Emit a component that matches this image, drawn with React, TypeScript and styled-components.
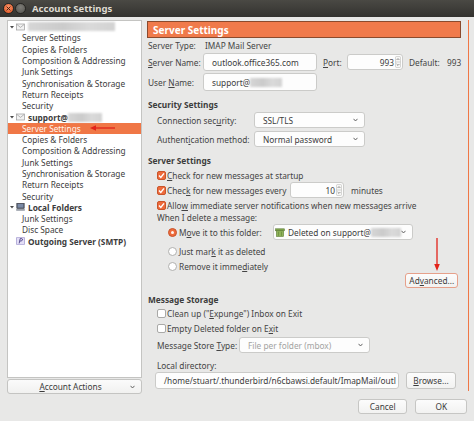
import React from 'react';
import styled, { createGlobalStyle } from 'styled-components';

const orange = '#f07746';

const GlobalStyle = createGlobalStyle`
  html, body {
    margin: 0;
    padding: 0;
  }
  body {
    background: #e8e8e7;
    font-family: "Noto Sans", "Open Sans", sans-serif;
    font-size: 8.3px;
    color: #3c3c3c;
  }
  * {
    box-sizing: border-box;
  }
`;

const Window = styled.div`
  width: 474px;
  height: 421px;
  display: flex;
  flex-direction: column;
  background: #e8e8e7;
  overflow: hidden;
`;

const TitleBar = styled.div`
  height: 17px;
  flex: none;
  display: flex;
  align-items: center;
  gap: 1px;
  padding-left: 3px;
  background: linear-gradient(#4a4944, #33322f);
`;

const WinButton = styled.span<{ $close?: boolean }>`
  width: 11px;
  height: 11px;
  border-radius: 50%;
  border: 1px solid #262522;
  display: flex;
  align-items: center;
  justify-content: center;
  background: ${({ $close }) =>
    $close
      ? 'radial-gradient(circle at 50% 35%, #f7946b, #e0501c)'
      : 'radial-gradient(circle at 50% 35%, #7d7c77, #54534e)'};
`;

const Title = styled.span`
  margin-left: 5px;
  color: #dfdbd2;
  font-weight: 700;
  font-size: 9.5px;
`;

const Body = styled.div`
  flex: 1;
  display: flex;
  padding: 3px 7px 0 7px;
`;

const LeftColumn = styled.div`
  width: 135px;
  flex: none;
  display: flex;
  flex-direction: column;
`;

const Tree = styled.div`
  position: relative;
  height: 358px;
  background: #ffffff;
  border: 1px solid #c4c4c2;
`;

const TreeRow = styled.div<{ $child?: boolean; $selected?: boolean; $bold?: boolean }>`
  height: 11.3px;
  display: flex;
  align-items: center;
  padding-left: ${({ $child }) => ($child ? '14px' : '2px')};
  background: ${({ $selected }) => ($selected ? orange : 'transparent')};
  color: ${({ $selected }) => ($selected ? '#fff4ec' : '#3c3c3c')};
  font-weight: ${({ $bold }) => ($bold ? 700 : 400)};
  white-space: nowrap;
`;

const Toggle = styled.svg`
  width: 4px;
  height: 4px;
  flex: none;
`;

const TreeIcon = styled.svg`
  width: 9px;
  height: 8px;
  margin: 0 3px 0 2px;
  flex: none;
`;

const Blur = styled.span<{ $w: number }>`
  display: inline-block;
  width: ${({ $w }) => $w}px;
  height: 9px;
  background: linear-gradient(90deg, #d6d6d6, #cbcbcb 40%, #dadada 70%, #d2d2d2);
  filter: blur(0.8px);
  flex: none;
`;

const AccountActions = styled.div`
  position: relative;
  margin-top: 1px;
  height: 15px;
  display: flex;
  align-items: center;
  justify-content: center;
  padding-right: 8px;
  border: 1px solid #c4c4c2;
  border-radius: 3px;
  background: linear-gradient(#fbfbfb, #f1f1f0);
`;

const ActionsChevron = styled.svg`
  position: absolute;
  right: 6px;
  top: 5px;
  width: 5px;
  height: 4px;
`;

const RightColumn = styled.div`
  flex: 1;
  margin-left: 2px;
  display: flex;
  flex-direction: column;
`;

const Pane = styled.div`
  position: relative;
  height: 371px;
  padding: 1px 7px 0 3px;
  border-right: 1px solid ${orange};
`;

const Header = styled.div`
  height: 17px;
  display: flex;
  align-items: center;
  padding-left: 5px;
  background: #f07a4b;
  border: 1px solid #8b4a2d;
  color: #ffffff;
  font-weight: 700;
  font-size: 10px;
`;

const Form = styled.div`
  padding-left: 1px;
`;

const Row = styled.div<{ $h: number; $mt?: number; $indent?: number; $end?: boolean }>`
  height: ${({ $h }) => $h}px;
  margin-top: ${({ $mt }) => $mt ?? 0}px;
  padding-left: ${({ $indent }) => $indent ?? 0}px;
  display: flex;
  align-items: center;
  justify-content: ${({ $end }) => ($end ? 'flex-end' : 'flex-start')};
  white-space: nowrap;
`;

const Heading = styled(Row)`
  font-weight: 700;
`;

const Label = styled.span<{ $w?: number; $ml?: number }>`
  flex: none;
  width: ${({ $w }) => ($w ? `${$w}px` : 'auto')};
  margin-left: ${({ $ml }) => $ml ?? 0}px;
  color: #444444;
`;

const Key = styled.span`
  text-decoration: underline;
  text-underline-offset: 1px;
`;

const Field = styled.div<{ $w: number; $h?: number; $disabled?: boolean }>`
  position: relative;
  flex: none;
  width: ${({ $w }) => $w}px;
  height: ${({ $h }) => $h ?? 16}px;
  display: flex;
  align-items: center;
  padding-left: 8px;
  overflow: hidden;
  background: #fdfdfd;
  border: 1px solid #cbcbc9;
  border-radius: 3px;
  color: ${({ $disabled }) => ($disabled ? '#a3a3a1' : '#3c3c3c')};
`;

const SpinField = styled(Field)`
  justify-content: flex-end;
  padding-left: 0;
  padding-right: 8px;
`;

const Spinner = styled.svg`
  position: absolute;
  right: 1px;
  top: 50%;
  transform: translateY(-50%);
  width: 6px;
  height: 12px;
`;

const Chevron = styled.svg`
  position: absolute;
  right: 6px;
  top: 50%;
  transform: translateY(-50%);
  width: 5px;
  height: 4px;
`;

const Check = styled.span<{ $checked?: boolean }>`
  flex: none;
  width: 9px;
  height: 9px;
  margin-right: 1px;
  border-radius: 2px;
  display: flex;
  align-items: center;
  justify-content: center;
  background: ${({ $checked }) => ($checked ? '#ee6b3c' : '#ffffff')};
  border: 1px solid ${({ $checked }) => ($checked ? '#c9542a' : '#a9a9a7')};
`;

const Radio = styled.span<{ $checked?: boolean }>`
  flex: none;
  width: 9px;
  height: 9px;
  margin-right: 2px;
  border-radius: 50%;
  display: flex;
  align-items: center;
  justify-content: center;
  background: ${({ $checked }) => ($checked ? '#ee6b3c' : '#ffffff')};
  border: 1px solid ${({ $checked }) => ($checked ? '#c9542a' : '#b0b0ae')};

  &::after {
    content: '';
    display: ${({ $checked }) => ($checked ? 'block' : 'none')};
    width: 3px;
    height: 3px;
    border-radius: 50%;
    background: #fff6f0;
  }
`;

const Button = styled.div<{ $w: number; $h?: number; $focus?: boolean; $ml?: number }>`
  flex: none;
  width: ${({ $w }) => $w}px;
  height: ${({ $h }) => $h ?? 15}px;
  margin-left: ${({ $ml }) => $ml ?? 0}px;
  display: flex;
  align-items: center;
  justify-content: center;
  white-space: nowrap;
  background: linear-gradient(#fcfcfc, #f2f2f1);
  border: 1px solid ${({ $focus }) => ($focus ? '#e6a08a' : '#c6c6c4')};
  border-radius: 3px;
  color: #3c3c3c;
`;

const Footer = styled.div`
  display: flex;
  justify-content: flex-end;
  gap: 8px;
  padding: 8px 2px 0 0;
`;

const Arrow = styled.svg<{ $x: number; $y: number }>`
  position: absolute;
  left: ${({ $x }) => $x}px;
  top: ${({ $y }) => $y}px;
  overflow: visible;
`;

const ChevronIcon = () => (
  <Chevron viewBox="0 0 5 4">
    <polyline points="0.5,0.8 2.5,3 4.5,0.8" fill="none" stroke="#555" strokeWidth="0.9" />
  </Chevron>
);

const SpinnerIcon = () => (
  <Spinner viewBox="0 0 6 12">
    <rect x="0.5" y="0.5" width="5" height="11" rx="1" fill="#f6f6f5" stroke="#bdbdbb" strokeWidth="0.6" />
    <line x1="0.5" y1="6" x2="5.5" y2="6" stroke="#bdbdbb" strokeWidth="0.6" />
    <polyline points="1.6,4 3,2.6 4.4,4" fill="none" stroke="#666" strokeWidth="0.7" />
    <polyline points="1.6,8 3,9.4 4.4,8" fill="none" stroke="#666" strokeWidth="0.7" />
  </Spinner>
);

const Tick = () => (
  <svg width="7" height="7" viewBox="0 0 7 7">
    <polyline points="1,3.6 2.8,5.4 6,1.4" fill="none" stroke="#ffffff" strokeWidth="1.4" />
  </svg>
);

const TreeToggle = () => (
  <Toggle viewBox="0 0 4 4">
    <polygon points="0,1 4,1 2,3.5" fill="#4a4a4a" />
  </Toggle>
);

const MailIcon = () => (
  <TreeIcon viewBox="0 0 9 8">
    <rect x="0.5" y="1" width="8" height="6" fill="#f2f2f2" stroke="#9a9a9a" strokeWidth="0.7" />
    <polyline points="0.8,1.4 4.5,4.4 8.2,1.4" fill="none" stroke="#9a9a9a" strokeWidth="0.7" />
  </TreeIcon>
);

const ComputerIcon = () => (
  <TreeIcon viewBox="0 0 9 8">
    <rect x="0.8" y="0.3" width="7.4" height="5.2" fill="#4b5263" stroke="#2c2f38" strokeWidth="0.5" />
    <rect x="1.6" y="1" width="5.8" height="3.6" fill="#7b8aa6" />
    <rect x="0.2" y="6" width="8.6" height="1.8" fill="#9aa0aa" />
  </TreeIcon>
);

const SmtpIcon = () => (
  <TreeIcon viewBox="0 0 9 8">
    <rect x="0.5" y="0.3" width="8" height="7.4" rx="0.6" fill="#e3def6" stroke="#8e84c4" strokeWidth="0.6" />
    <path d="M3.2 6.4 L4.2 1.6 L5.8 1.6 Q6.8 1.8 6.4 3 Q6 4 4.8 4 L3.8 4" fill="none" stroke="#4a3f86" strokeWidth="0.9" />
  </TreeIcon>
);

const TrashIcon = () => (
  <svg width="10" height="9" viewBox="0 0 10 9" style={{ flex: 'none', marginLeft: -7, marginRight: 3 }}>
    <rect x="0.5" y="0.8" width="9" height="2" fill="#7da34a" stroke="#557530" strokeWidth="0.5" />
    <rect x="1.3" y="2.8" width="7.4" height="5.8" fill="#8fb35a" stroke="#557530" strokeWidth="0.5" />
    <line x1="3.5" y1="3.8" x2="3.5" y2="7.8" stroke="#5f8236" strokeWidth="0.6" />
    <line x1="6.5" y1="3.8" x2="6.5" y2="7.8" stroke="#5f8236" strokeWidth="0.6" />
  </svg>
);

const accountChildren = [
  'Server Settings',
  'Copies & Folders',
  'Composition & Addressing',
  'Junk Settings',
  'Synchronisation & Storage',
  'Return Receipts',
  'Security',
];

const App: React.FC = () => (
  <>
    <GlobalStyle />
    <Window>
      <TitleBar>
        <WinButton $close>
          <svg width="5" height="5" viewBox="0 0 5 5">
            <path d="M0.6 0.6 L4.4 4.4 M4.4 0.6 L0.6 4.4" stroke="#3a1a0c" strokeWidth="0.9" />
          </svg>
        </WinButton>
        <WinButton />
        <Title>Account Settings</Title>
      </TitleBar>

      <Body>
        <LeftColumn>
          <Tree>
            <TreeRow>
              <TreeToggle />
              <MailIcon />
              <Blur $w={87} />
            </TreeRow>
            {accountChildren.map((item) => (
              <TreeRow key={`a-${item}`} $child>
                {item}
              </TreeRow>
            ))}
            <TreeRow $bold>
              <TreeToggle />
              <MailIcon />
              support@
              <Blur $w={34} />
            </TreeRow>
            {accountChildren.map((item, i) => (
              <TreeRow key={`b-${item}`} $child $selected={i === 0}>
                {item}
              </TreeRow>
            ))}
            <TreeRow $bold>
              <TreeToggle />
              <ComputerIcon />
              Local Folders
            </TreeRow>
            <TreeRow $child>Junk Settings</TreeRow>
            <TreeRow $child>Disc Space</TreeRow>
            <TreeRow $bold>
              <span style={{ width: 4 }} />
              <SmtpIcon />
              Outgoing Server (SMTP)
            </TreeRow>
            <Arrow $x={82} $y={102} width="26" height="10" viewBox="0 0 26 10">
              <line x1="5" y1="5" x2="25" y2="5" stroke="#e2231a" strokeWidth="1.3" />
              <polygon points="0,5 6,2.2 6,7.8" fill="#e2231a" />
            </Arrow>
          </Tree>
          <AccountActions>
            <span>
              <Key>A</Key>ccount Actions
            </span>
            <ActionsChevron viewBox="0 0 5 4">
              <polyline points="0.5,0.8 2.5,3 4.5,0.8" fill="none" stroke="#555" strokeWidth="0.9" />
            </ActionsChevron>
          </AccountActions>
        </LeftColumn>

        <RightColumn>
          <Pane>
            <Header>Server Settings</Header>
            <Form>
              <Row $h={14}>
                <Label $w={57}>Server Type:</Label>
                <Label>IMAP Mail Server</Label>
              </Row>
              <Row $h={20}>
                <Label $w={55}>
                  <Key>S</Key>erver Name:
                </Label>
                <Field $w={114} $h={18}>outlook.office365.com</Field>
                <Label $w={24} $ml={6}>
                  <Key>P</Key>ort:
                </Label>
                <SpinField $w={56}>
                  993
                  <SpinnerIcon />
                </SpinField>
                <Label $w={38} $ml={6}>Default:</Label>
                <Label>993</Label>
              </Row>
              <Row $h={20}>
                <Label $w={55}>
                  User <Key>N</Key>ame:
                </Label>
                <Field $w={114} $h={18}>
                  support@
                  <Blur $w={32} />
                </Field>
              </Row>

              <Heading $h={14} $mt={5}>Security Settings</Heading>
              <Row $h={16} $mt={1} $indent={9}>
                <Label $w={97}>
                  Connection sec<Key>u</Key>rity:
                </Label>
                <Field $w={111}>
                  SSL/TLS
                  <ChevronIcon />
                </Field>
              </Row>
              <Row $h={16} $mt={3} $indent={9}>
                <Label $w={97}>
                  Authent<Key>i</Key>cation method:
                </Label>
                <Field $w={111}>
                  Normal password
                  <ChevronIcon />
                </Field>
              </Row>

              <Heading $h={14} $mt={6}>Server Settings</Heading>
              <Row $h={14} $mt={1} $indent={9}>
                <Check $checked>
                  <Tick />
                </Check>
                <Label>
                  <Key>C</Key>heck for new messages at startup
                </Label>
              </Row>
              <Row $h={16} $indent={9}>
                <Check $checked>
                  <Tick />
                </Check>
                <Label $w={123}>
                  Chec<Key>k</Key> for new messages every
                </Label>
                <SpinField $w={54}>
                  10
                  <SpinnerIcon />
                </SpinField>
                <Label $ml={7}>minutes</Label>
              </Row>
              <Row $h={14} $indent={9}>
                <Check $checked>
                  <Tick />
                </Check>
                <Label>
                  Allo<Key>w</Key> immediate server notifications when new messages arrive
                </Label>
              </Row>
              <Row $h={11} $indent={9}>
                <Label>When I delete a message:</Label>
              </Row>
              <Row $h={16} $mt={1} $indent={20}>
                <Radio $checked />
                <Label $w={94}>
                  M<Key>o</Key>ve it to this folder:
                </Label>
                <Field $w={140}>
                  <TrashIcon />
                  Deleted on support@
                  <Blur $w={30} />
                  <ChevronIcon />
                </Field>
              </Row>
              <Row $h={14} $mt={4} $indent={20}>
                <Radio />
                <Label>
                  Just mar<Key>k</Key> it as deleted
                </Label>
              </Row>
              <Row $h={14} $mt={1} $indent={20}>
                <Radio />
                <Label>
                  Remove it imme<Key>d</Key>iately
                </Label>
              </Row>
              <Row $h={15} $end style={{ paddingRight: 3 }}>
                <Button $w={53} $focus>
                  Ad<Key>v</Key>anced...
                </Button>
              </Row>

              <Heading $h={14} $mt={4}>Message Storage</Heading>
              <Row $h={14} $indent={9}>
                <Check />
                <Label>
                  Clean up ("<Key>E</Key>xpunge") Inbox on Exit
                </Label>
              </Row>
              <Row $h={14} $mt={1} $indent={9}>
                <Check />
                <Label>
                  Empty Deleted folder on E<Key>x</Key>it
                </Label>
              </Row>
              <Row $h={16} $mt={2} $indent={9}>
                <Label $w={82}>
                  Message Store <Key>T</Key>ype:
                </Label>
                <Field $w={131} $disabled>
                  File per folder (mbox)
                  <ChevronIcon />
                </Field>
              </Row>
              <Row $h={14} $mt={5} $indent={9}>
                <Label>Local directory:</Label>
              </Row>
              <Row $h={17} $indent={7}>
                <Field $w={244} $h={17}>
                  /home/stuart/.thunderbird/n6cbawsi.default/ImapMail/outl
                </Field>
                <Button $w={50} $h={17} $ml={7}>
                  <Key>B</Key>rowse...
                </Button>
              </Row>
            </Form>
            <Arrow $x={288} $y={218} width="10" height="34" viewBox="0 0 10 34">
              <line x1="5" y1="0" x2="5" y2="27" stroke="#e2231a" strokeWidth="1.3" />
              <polygon points="5,33 2.2,26 7.8,26" fill="#e2231a" />
            </Arrow>
          </Pane>
          <Footer>
            <Button $w={49}>Cancel</Button>
            <Button $w={52}>OK</Button>
          </Footer>
        </RightColumn>
      </Body>
    </Window>
  </>
);

export default App;
